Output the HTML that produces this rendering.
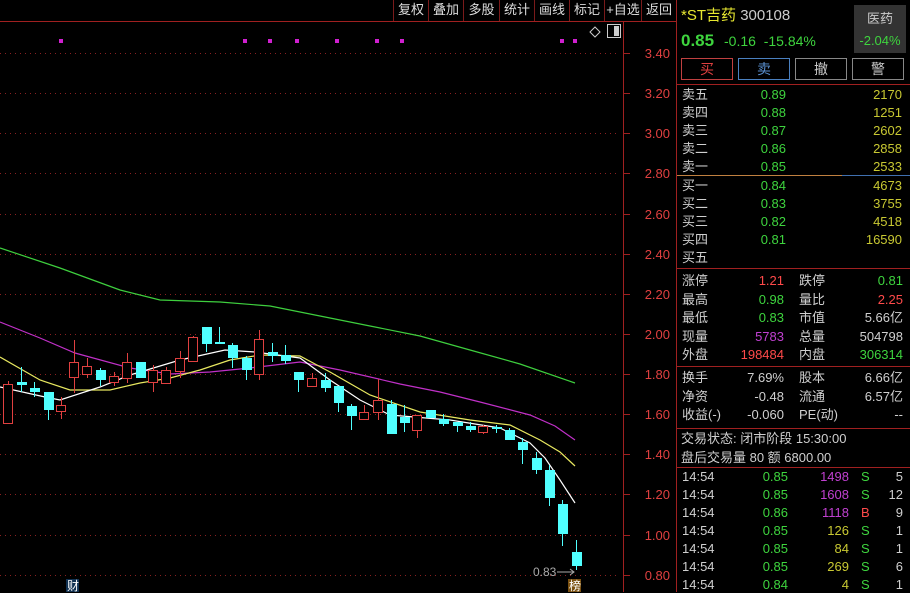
<!DOCTYPE html>
<html><head><meta charset="utf-8"><style>
*{margin:0;padding:0;box-sizing:border-box}
body{width:910px;height:592px;background:#000;overflow:hidden;position:relative;font-family:"Liberation Sans","Noto Sans CJK SC",sans-serif;font-size:13px;color:#ccc}
.a{position:absolute;white-space:nowrap;line-height:16px}
.r{text-align:right}
.g{color:#3ed43e}.rd{color:#ff4a4a}.y{color:#c8c832}.w{color:#cfcfcf}.m{color:#c040d0}
.btn{position:absolute;top:58px;width:52px;height:22px;border:1px solid #888;text-align:center;line-height:20px;font-size:14px;color:#ccc}
.hl{position:absolute;left:676px;width:234px;height:1px;background:#a02020}
.tb{position:absolute;top:0;height:21px;line-height:20px;font-size:13px;color:#ddd;border-left:1px solid #7a1a1a;text-align:center}
</style></head><body>
<svg width="910" height="592" style="position:absolute;left:0;top:0">
<g stroke="#8a2020" stroke-dasharray="1,4" stroke-width="1">
<line x1="0" y1="53.5" x2="620" y2="53.5"/><line x1="0" y1="93.5" x2="620" y2="93.5"/><line x1="0" y1="133.5" x2="620" y2="133.5"/><line x1="0" y1="173.5" x2="620" y2="173.5"/><line x1="0" y1="214.5" x2="620" y2="214.5"/><line x1="0" y1="254.5" x2="620" y2="254.5"/><line x1="0" y1="294.5" x2="620" y2="294.5"/><line x1="0" y1="334.5" x2="620" y2="334.5"/><line x1="0" y1="374.5" x2="620" y2="374.5"/><line x1="0" y1="414.5" x2="620" y2="414.5"/><line x1="0" y1="454.5" x2="620" y2="454.5"/><line x1="0" y1="494.5" x2="620" y2="494.5"/><line x1="0" y1="535.5" x2="620" y2="535.5"/><line x1="0" y1="575.5" x2="620" y2="575.5"/>
</g>
<line x1="623.5" y1="21" x2="623.5" y2="592" stroke="#a02020"/>
<line x1="676.5" y1="0" x2="676.5" y2="592" stroke="#a02020"/>
<line x1="0" y1="21.5" x2="676" y2="21.5" stroke="#a02020"/>
<g stroke="#a02020"><line x1="623" y1="53.5" x2="630" y2="53.5"/><line x1="623" y1="93.5" x2="630" y2="93.5"/><line x1="623" y1="133.5" x2="630" y2="133.5"/><line x1="623" y1="173.5" x2="630" y2="173.5"/><line x1="623" y1="214.5" x2="630" y2="214.5"/><line x1="623" y1="254.5" x2="630" y2="254.5"/><line x1="623" y1="294.5" x2="630" y2="294.5"/><line x1="623" y1="334.5" x2="630" y2="334.5"/><line x1="623" y1="374.5" x2="630" y2="374.5"/><line x1="623" y1="414.5" x2="630" y2="414.5"/><line x1="623" y1="454.5" x2="630" y2="454.5"/><line x1="623" y1="494.5" x2="630" y2="494.5"/><line x1="623" y1="535.5" x2="630" y2="535.5"/><line x1="623" y1="575.5" x2="630" y2="575.5"/></g>
<g fill="#d020d0"><rect x="59" y="39" width="4" height="4"/><rect x="243" y="39" width="4" height="4"/><rect x="268" y="39" width="4" height="4"/><rect x="295" y="39" width="4" height="4"/><rect x="335" y="39" width="4" height="4"/><rect x="375" y="39" width="4" height="4"/><rect x="400" y="39" width="4" height="4"/><rect x="560" y="39" width="4" height="4"/><rect x="573" y="39" width="4" height="4"/></g>
<path d="M595 27 L600 32 L595 37 L590 32Z" fill="none" stroke="#ccc"/>
<rect x="607.5" y="24.5" width="13" height="13" fill="none" stroke="#ccc"/><rect x="614" y="26" width="5" height="10" fill="#ccc"/>
<g fill="none" stroke-width="1.2">
<polyline stroke="#3ecf3e" points="0,248 60,268 120,290 160,300 220,302 270,306 320,316 370,326 420,336 470,350 520,364 575,383"/>
<polyline stroke="#c030c8" points="0,322 40,338 75,353 130,368 170,374 210,372 250,368 300,362 340,370 400,384 440,392 480,402 530,415 555,426 575,440"/>
<polyline stroke="#e8e860" points="0,357 40,380 70,390 110,390 140,383 170,378 200,370 230,360 260,355 300,356 330,372 370,395 420,412 470,420 510,425 540,440 560,452 575,466"/>
<polyline stroke="#ffffff" points="0,387 45,397 60,400 100,387 130,375 180,360 225,350 255,352 300,358 330,380 360,400 390,415 450,420 500,428 530,443 545,458 560,480 575,503"/>
</g>
<g id="c"></g>
<text x="533" y="576" fill="#aaa" font-size="12" font-family="Liberation Sans">0.83</text>
<line x1="557" y1="572" x2="574" y2="572" stroke="#aaa"/><path d="M570 569 L574 572 L570 575" fill="none" stroke="#aaa"/>
<rect x="66" y="579" width="13" height="13" fill="#103050"/><text x="67" y="590" fill="#fff" font-size="12" font-family="Noto Sans CJK SC">财</text>
<rect x="568" y="579" width="13" height="13" fill="#7a5010"/><text x="569" y="590" fill="#fff" font-size="12" font-family="Noto Sans CJK SC">榜</text>
</svg>
<div class="a r" style="left:630px;top:46px;width:40px;color:#e04040">3.40</div>
<div class="a r" style="left:630px;top:86px;width:40px;color:#e04040">3.20</div>
<div class="a r" style="left:630px;top:126px;width:40px;color:#e04040">3.00</div>
<div class="a r" style="left:630px;top:166px;width:40px;color:#e04040">2.80</div>
<div class="a r" style="left:630px;top:207px;width:40px;color:#e04040">2.60</div>
<div class="a r" style="left:630px;top:247px;width:40px;color:#e04040">2.40</div>
<div class="a r" style="left:630px;top:287px;width:40px;color:#e04040">2.20</div>
<div class="a r" style="left:630px;top:327px;width:40px;color:#e04040">2.00</div>
<div class="a r" style="left:630px;top:367px;width:40px;color:#e04040">1.80</div>
<div class="a r" style="left:630px;top:407px;width:40px;color:#e04040">1.60</div>
<div class="a r" style="left:630px;top:447px;width:40px;color:#e04040">1.40</div>
<div class="a r" style="left:630px;top:487px;width:40px;color:#e04040">1.20</div>
<div class="a r" style="left:630px;top:528px;width:40px;color:#e04040">1.00</div>
<div class="a r" style="left:630px;top:568px;width:40px;color:#e04040">0.80</div>
<div class="tb" style="left:393px;width:35px">复权</div>
<div class="tb" style="left:428px;width:35px">叠加</div>
<div class="tb" style="left:463px;width:36px">多股</div>
<div class="tb" style="left:499px;width:35px">统计</div>
<div class="tb" style="left:534px;width:35px">画线</div>
<div class="tb" style="left:569px;width:35px">标记</div>
<div class="tb" style="left:604px;width:37px">+自选</div>
<div class="tb" style="left:641px;width:35px">返回</div>
<div class="a" style="left:681px;top:7px;font-size:15px;line-height:18px"><span style="color:#e8e830">*ST吉药</span> <span style="color:#ccc">300108</span></div>
<div class="a g" style="left:681px;top:31px;font-size:17px;line-height:20px;font-weight:bold">0.85</div>
<div class="a g" style="left:724px;top:33px;font-size:14px">-0.16&nbsp;&nbsp;-15.84%</div>
<div class="a" style="left:854px;top:5px;width:52px;height:48px;background:#333;text-align:center;line-height:22px;padding-top:3px">医药<br><span class="g">-2.04%</span></div>
<div class="btn" style="left:681px;border-color:#c04040;color:#e04040">买</div>
<div class="btn" style="left:738px;border-color:#4a80c0;color:#5a90d0">卖</div>
<div class="btn" style="left:795px">撤</div>
<div class="btn" style="left:852px">警</div>
<div class="hl" style="top:84px"></div>
<div style="position:absolute;left:677px;top:175px;width:165px;height:1px;background:#c08040"></div>
<div style="position:absolute;left:842px;top:175px;width:68px;height:1px;background:#4070b0"></div>
<div class="hl" style="top:268px"></div><div class="hl" style="top:366px"></div><div class="hl" style="top:428px"></div><div class="hl" style="top:467px"></div>
<div id="ob"></div>
<script>
var h='';
function t(x,y,s,c,w){h+='<div class="a '+(c||'w')+(w?' r':'')+'" style="left:'+x+'px;top:'+y+'px;'+(w?'width:'+w+'px':'')+'">'+s+'</div>';}
var ob=[['卖五','0.89','2170'],['卖四','0.88','1251'],['卖三','0.87','2602'],['卖二','0.86','2858'],['卖一','0.85','2533'],['买一','0.84','4673'],['买二','0.83','3755'],['买三','0.82','4518'],['买四','0.81','16590'],['买五','','']];
ob.forEach(function(r,i){var y=(i<5?87:178)+(i%5)*18;t(682,y,r[0]);t(740,y,r[1],'g',46);t(840,y,r[2],'y',62);});
var st=[['涨停','1.21','rd','跌停','0.81','g'],['最高','0.98','g','量比','2.25','rd'],['最低','0.83','g','市值','5.66亿','w'],['现量','5783','m','总量','504798','w'],['外盘','198484','rd','内盘','306314','g']];
st.forEach(function(r,i){var y=273+i*18.5;t(682,y,r[0]);t(720,y,r[1],r[2],64);t(799,y,r[3]);t(840,y,r[4],r[5],63);});
var s2=[['换手','7.69%','股本','6.66亿'],['净资','-0.48','流通','6.57亿'],['收益(-)','-0.060','PE(动)','--']];
s2.forEach(function(r,i){var y=370+i*18.5;t(682,y,r[0]);t(720,y,r[1],'w',64);t(799,y,r[2]);t(840,y,r[3],'w',63);});
t(681,431,'交易状态: 闭市阶段 15:30:00');t(681,450,'盘后交易量 80 额 6800.00');
var tr=[['0.85','1498','m','S','5'],['0.85','1608','m','S','12'],['0.86','1118','m','B','9'],['0.85','126','y','S','1'],['0.85','84','y','S','1'],['0.85','269','y','S','6'],['0.84','4','y','S','1']];
tr.forEach(function(r,i){var y=469+i*18;t(682,y,'14:54');t(740,y,r[0],'g',48);t(800,y,r[1],r[2],49);t(861,y,r[3],r[3]=='B'?'rd':'g');t(880,y,r[4],'w',23);});
document.getElementById('ob').innerHTML=h;
var C=[[8,'r',384,423,381,423],[21,'c',382,385,367,392],[34,'c',388,392,382,397],[48,'c',392,410,392,420],[61,'r',405,411,397,419],[74,'r',362,377,340,393],[87,'r',366,374,358,378],[100,'c',370,380,368,386],[114,'r',376,382,372,386],[127,'r',362,378,353,383],[140,'c',362,378,362,378],[153,'r',370,382,365,392],[166,'r',370,383,367,383],[180,'r',358,371,351,378],[193,'r',337,361,336,361],[206,'c',327,344,327,352],[219,'c',342,344,327,344],[232,'c',345,358,343,368],[246,'c',358,370,356,380],[259,'r',339,374,330,380],[272,'c',352,356,343,362],[285,'c',355,361,345,364],[298,'c',372,380,372,392],[312,'r',378,386,373,387],[325,'c',380,388,373,392],[338,'c',386,403,386,412],[351,'c',406,416,404,430],[364,'r',412,419,405,419],[378,'r',400,412,379,420],[391,'c',404,434,400,434],[404,'c',417,423,405,432],[417,'r',415,430,415,438],[430,'c',410,418,410,418],[443,'c',419,424,414,426],[457,'c',422,426,422,432],[470,'c',426,430,422,432],[483,'r',426,432,425,434],[496,'c',427,429,425,433],[509,'c',430,440,428,440],[522,'c',442,450,438,464],[536,'c',458,470,452,474],[549,'c',470,498,465,506],[562,'c',504,534,500,546],[576,'c',552,566,540,570]];
var s='';C.forEach(function(c){var x=c[0],col=c[1]=='r'?'#e04040':'#50ffff';s+='<line x1="'+(x+.5)+'" y1="'+c[4]+'" x2="'+(x+.5)+'" y2="'+c[5]+'" stroke="'+col+'"/>';
if(c[1]=='r'){s+='<rect x="'+(x-4.5)+'" y="'+(c[2]+.5)+'" width="9" height="'+Math.max(c[3]-c[2],1)+'" fill="#000" stroke="'+col+'"/>';}else{s+='<rect x="'+(x-4)+'" y="'+c[2]+'" width="10" height="'+Math.max(c[3]-c[2],2)+'" fill="'+col+'"/>';}});
document.getElementById('c').innerHTML=s;
</script>
</body></html>
